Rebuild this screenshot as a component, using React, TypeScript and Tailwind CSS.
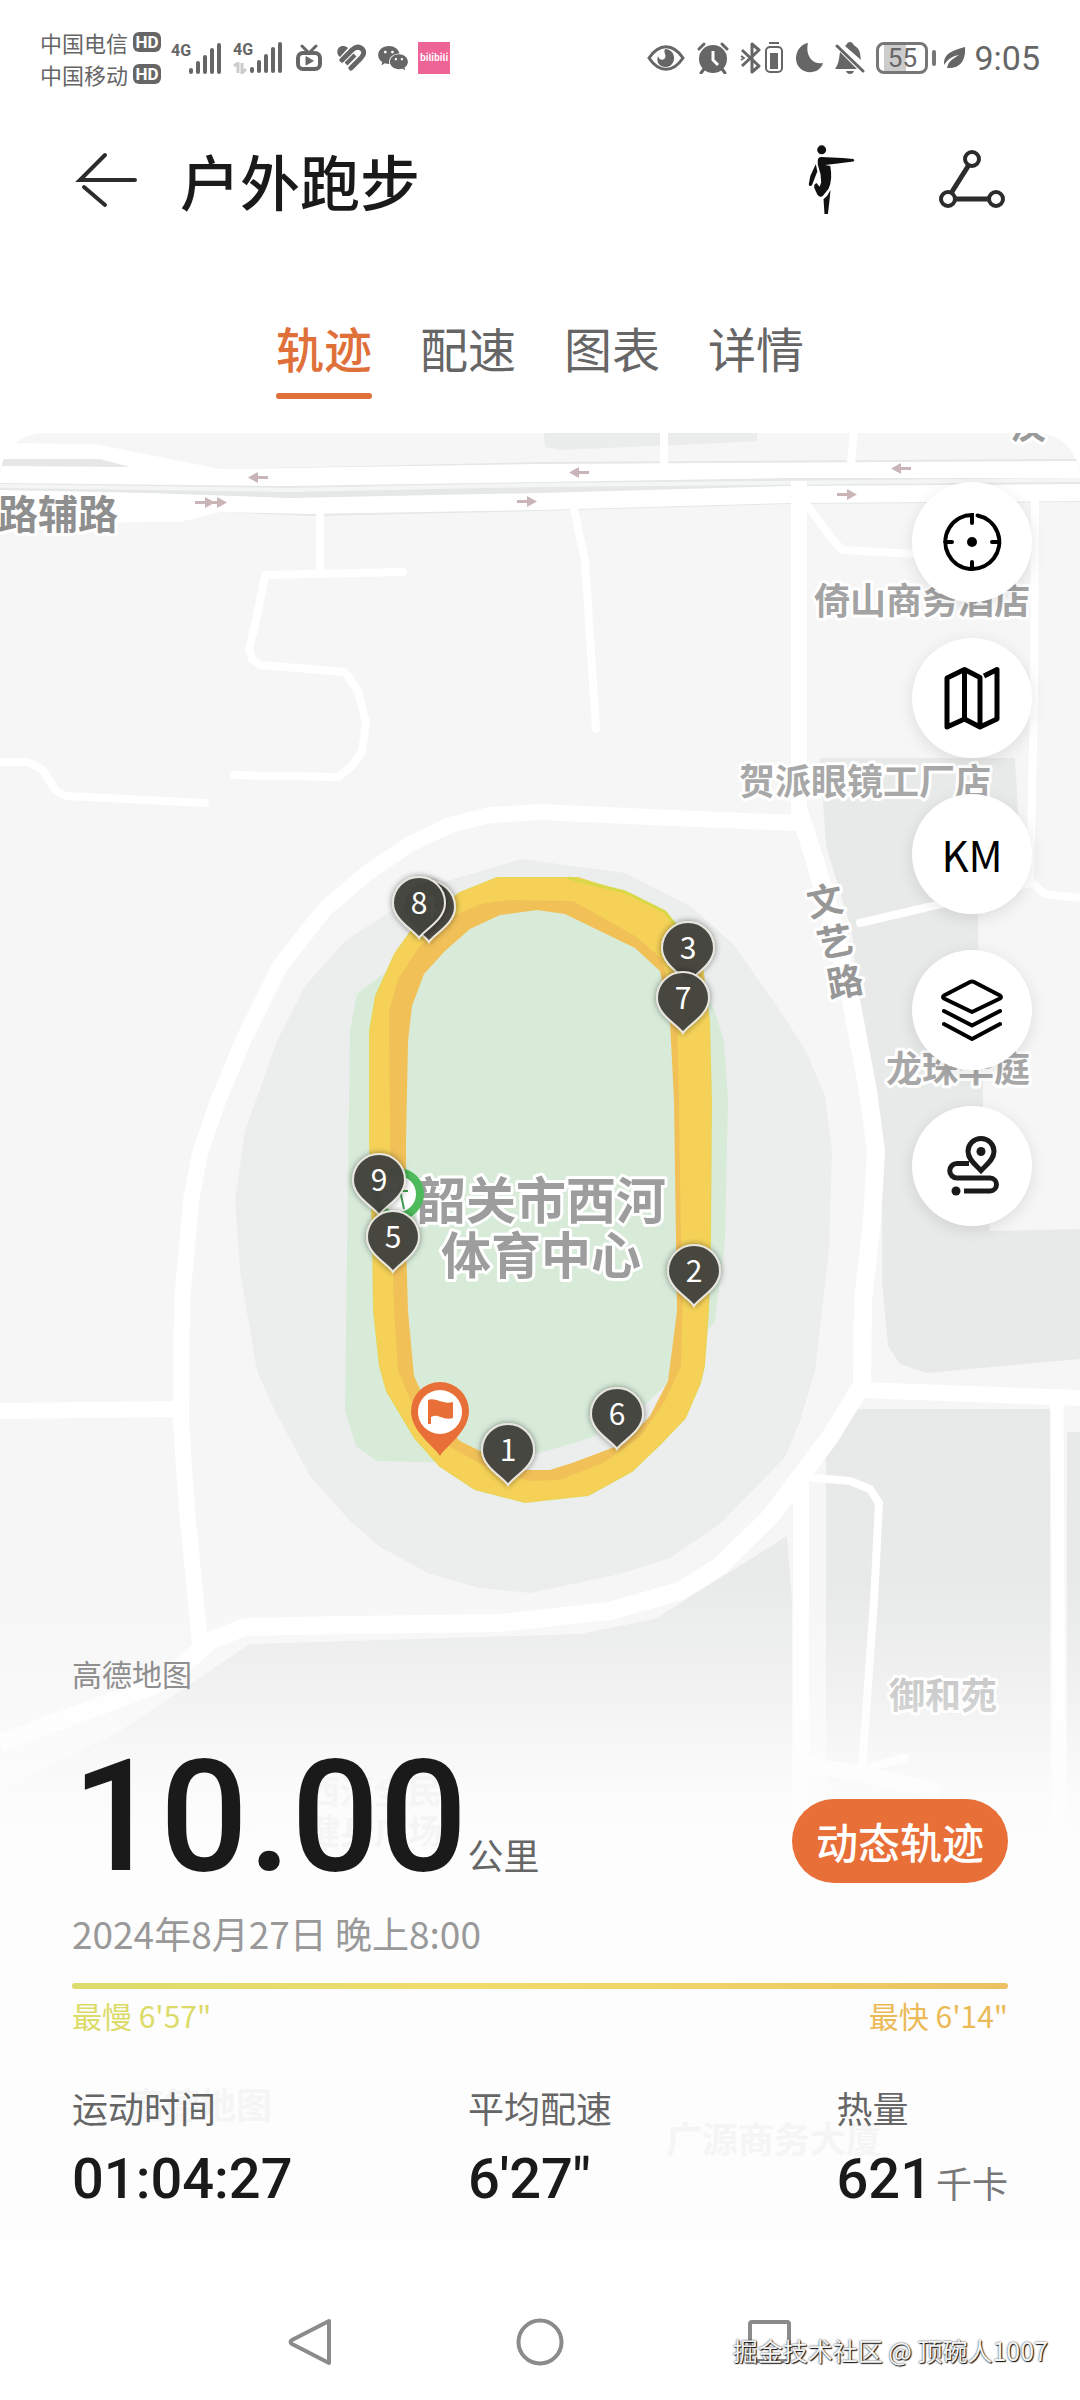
import { useState } from 'react';
import type { ReactNode } from 'react';
import { AiFillWechat } from 'react-icons/ai';

const TABS = ['轨迹', '配速', '图表', '详情'];

interface Pin {
  label: string;
  x: number;
  y: number;
}

// x / y is the tip of each kilometre pin, in map units
const PINS: Pin[] = [
  { label: '4', x: 429, y: 941 },
  { label: '8', x: 419, y: 937 },
  { label: '3', x: 688, y: 982 },
  { label: '7', x: 683, y: 1032 },
  { label: '9', x: 379, y: 1214 },
  { label: '5', x: 393, y: 1271 },
  { label: '2', x: 694, y: 1305 },
  { label: '6', x: 617, y: 1448 },
  { label: '1', x: 508, y: 1484 },
];

const PLACES = [
  { text: '倚山商务酒店', x: 922, y: 613, size: 36, fill: '#a3a3a3' },
  { text: '贺派眼镜工厂店', x: 865, y: 794, size: 36, fill: '#a8a8a8' },
  { text: '龙珠华庭', x: 958, y: 1081, size: 36, fill: '#a8a8a8' },
  { text: '御和苑', x: 943, y: 1708, size: 36, fill: '#a9a9a9' },
  { text: '韶关市西河', x: 541, y: 1218, size: 50, fill: '#9d9d9d' },
  { text: '体育中心', x: 541, y: 1273, size: 50, fill: '#9d9d9d' },
];

// labels of the lower map that shimmer through the summary panel
const FADED_PLACES = [
  { text: '西河全民', x: 374, y: 1803, size: 34 },
  { text: '健身广场', x: 374, y: 1843, size: 34 },
  { text: '高德地图', x: 200, y: 2118, size: 36 },
  { text: '广源商务大厦', x: 774, y: 2152, size: 36 },
];

const TRACK_OUTER =
  'M497 877 L578 877 L625 892 L665 912 L700 950 L709 1020 L711 1100 L710 1240 L708 1310 L704 1365 L700 1382 L685 1417 L660 1443 L632 1470 L588 1494 L525 1501 L475 1488 L440 1465 L415 1437 L387 1390 L380 1365 L374 1310 L373 1240 L370 1140 L370 1030 L376 995 L395 953 L415 925 L460 892 Z';
const TRACK_INNER =
  'M537 909 L500 914 L470 928 L445 950 L424 973 L412 1005 L408 1040 L406 1140 L406 1240 L408 1310 L414 1375 L430 1410 L460 1440 L490 1455 L525 1469 L550 1469 L575 1461 L625 1442 L650 1415 L668 1380 L677 1310 L676 1240 L674 1100 L670 1020 L660 970 L635 947 L600 930 L565 913 Z';
const TRACK_LANE =
  'M510 899 L480 903 L450 917 L420 945 L398 978 L389 1010 L390 1140 L392 1240 L394 1310 L398 1370 L416 1412 L450 1446 L490 1468 L530 1480 L560 1479 L605 1461 L640 1436 L665 1400 L681 1365 L683 1290 L681 1240 L679 1100 L677 1020 L662 958 L635 935 L600 915 L573 900 Z';

function MapArrow({ x, y, flip }: { x: number; y: number; flip?: boolean }) {
  return (
    <g transform={`translate(${x} ${y})${flip ? ' scale(-1 1)' : ''}`} fill="#c9b4b7">
      <rect x="-10" y="-1" width="12" height="3" />
      <path d="M0 -5 L10 0.5 L0 6 Z" />
    </g>
  );
}

function RouteMap() {
  return (
    <svg
      className="absolute inset-0 h-full w-full"
      viewBox="0 432 1080 1808"
      preserveAspectRatio="xMidYMin slice"
      role="img"
      aria-label="跑步轨迹地图"
    >
      <defs>
        <linearGradient id="mapFade" x1="0" y1="0" x2="0" y2="1">
          <stop offset="0" stopColor="#fdfdfd" stopOpacity="0" />
          <stop offset="0.45" stopColor="#fdfdfd" stopOpacity="0.45" />
          <stop offset="0.8" stopColor="#fdfdfd" stopOpacity="0.9" />
          <stop offset="1" stopColor="#fdfdfd" stopOpacity="1" />
        </linearGradient>
        <filter id="pinShadow" x="-50%" y="-50%" width="200%" height="200%">
          <feDropShadow dx="0" dy="0" stdDeviation="3" floodColor="#000" floodOpacity="0.45" />
        </filter>
      </defs>

      <rect y="432" width="1080" height="1808" fill="#f6f6f6" />

      {/* blocks */}
      <g fill="#e8e9e9">
        <path d="M544 432 H757 V440 L700 443 L560 449 L545 446 Z" fill="#eaedec" />
        <path d="M820 757 L1015 757 L1022 885 L978 900 L979 1040 L983 1040 L983 1150 L990 1230 L1080 1228 V1358 L926 1372 L900 1363 L888 1345 L882 1280 L882 1190 L874 1110 L858 1000 L852 930 L826 845 Z" />
        <path d="M857 1408 H1050 V1900 H826 V1456 Z" />
        <path d="M1067 1431 H1080 V1900 H1067 Z" />
        <path d="M787 1535 L655 1618 L580 1633 L250 1643 L120 1730 L0 1790 V1900 H792 V1600 Z" fill="#e9eaea" />
      </g>
      <path
        d="M522 858 L625 872 L690 905 L735 945 L780 1010 L806 1050 L825 1095 L832 1150 L829 1250 L815 1370 L800 1420 L785 1456 L760 1482 L720 1523 L670 1557 L620 1573 L530 1592 L480 1587 L430 1573 L380 1546 L350 1520 L310 1475 L275 1410 L257 1370 L240 1270 L235 1200 L245 1130 L277 1040 L305 985 L345 940 L430 885 Z"
        fill="#ebeeed"
      />
      <path
        d="M390 968 L357 993 L350 1030 L347 1250 L345 1410 L356 1445 L377 1460 L470 1462 L540 1452 L590 1437 L640 1408 L665 1385 L715 1320 L725 1240 L728 1100 L724 1040 L714 1008 L690 960 L600 890 L480 890 Z"
        fill="#d8ebd9"
      />

      {/* main avenue */}
      <path d="M0 458 H110 L220 468 L540 461 L1080 458 V501 L790 503 L540 510 L310 515 L220 511 L0 500 Z" fill="#e5e8e7" />
      <path d="M0 442 L95 443 L220 468 L540 463 L1080 460 V477 H790 L540 481 L290 485 L0 482 V465 L130 466 L100 458 H0 Z" fill="#fff" />
      <path d="M0 489 L150 492 L290 497 L540 492 L790 485 L1080 483 V500 L790 502 L540 509 L310 513 L220 511 L180 521 L0 522 Z" fill="#fff" />
      <path d="M0 485 L290 489 L540 484 L1080 479" fill="none" stroke="#f4f6f5" strokeWidth="4" />

      {/* roads */}
      <g fill="none" stroke="#fff" strokeLinejoin="round">
        <g strokeWidth="8" strokeLinecap="round">
          <path d="M320 512 V571" />
          <path d="M403 571 L265 574 L256 620 L249 648 L252 658 L260 664 L345 671 L358 690 L366 722 L362 750 L352 765 L338 776 L234 774" />
          <path d="M0 761 L28 761 L43 769 L56 790 L66 795 L205 802" />
          <path d="M574 508 L585 560 L596 728" />
          <path d="M664 432 V462 M854 432 L851 462" />
          <path d="M804 500 L830 535 L842 549 L915 553" />
          <path d="M1035 500 L1034 700 L1030 880 L1045 893 L1080 897 M1030 882 L860 922" />
          <path d="M804 1476 L850 1480 L870 1488 L879 1502 L874 1600 L862 1768 L905 1757" />
        </g>
        <path d="M1057 1400 L1060 1900" strokeWidth="13" />
        <g strokeWidth="16">
          <path d="M799 480 V820" />
          <path d="M0 1410 L181 1408" />
          <path d="M862 1389 L1080 1397" />
          <path d="M801 1475 V1900" />
          <path d="M800 1764 L860 1772 L940 1792" />
          <path d="M200 1642 L187 1510 L181 1420 L182 1300 L191 1200 L200 1152 L218 1100 L243 1040 L280 965 L325 908 L367 872 L410 843 L450 824 L490 814 L540 811 L650 816 L796 822" />
        </g>
        <path d="M799 810 L815 860 L838 940 L853 1010 L868 1090 L876 1150 L872 1220 L863 1300 L862 1384 L830 1436 L800 1476 L770 1516 L720 1565 L680 1590 L610 1610 L500 1622 L350 1624 L245 1626 L210 1640 L165 1680 L100 1705 L0 1742" strokeWidth="18" />
      </g>

      <MapArrow x={258} y={476} flip />
      <MapArrow x={205} y={501} />
      <MapArrow x={217} y={501} />
      <MapArrow x={527} y={500} />
      <MapArrow x={579} y={471} flip />
      <MapArrow x={847} y={493} />
      <MapArrow x={901} y={467} flip />

      {/* running track */}
      <path d={TRACK_OUTER} fill="none" stroke="#e6d858" strokeWidth="2" />
      <path d={`${TRACK_OUTER} ${TRACK_INNER}`} fill="#f1c158" fillRule="evenodd" />
      <path d={`${TRACK_OUTER} ${TRACK_LANE}`} fill="#f5d257" fillRule="evenodd" />
      <path d="M568 877 L625 891 L665 911 L676 925" fill="none" stroke="#d8d848" strokeWidth="3" />

      {/* street names */}
      <g fontWeight="700" stroke="#fff" strokeWidth="6" strokeLinejoin="round" paintOrder="stroke">
        <text x="118" y="528" fontSize="40" textAnchor="end" fill="#8f8f8f">路辅路</text>
        <text x="1010" y="438" fontSize="36" fill="#9a9a9a">汶</text>
        {[
          { ch: '文', x: 825, y: 900 },
          { ch: '艺', x: 835, y: 941 },
          { ch: '路', x: 845, y: 981 },
        ].map(({ ch, x, y }) => (
          <text key={ch} transform={`translate(${x} ${y}) rotate(-11)`} y="13" fontSize="36" textAnchor="middle" fill="#979797">
            {ch}
          </text>
        ))}
      </g>

      <g textAnchor="middle" fontWeight="700" stroke="#fff" strokeWidth="6" strokeLinejoin="round" paintOrder="stroke">
        {PLACES.map((place) => (
          <text key={place.text} x={place.x} y={place.y} fontSize={place.size} fill={place.fill}>
            {place.text}
          </text>
        ))}
      </g>

      <circle cx="398" cy="1193" r="22" fill="#fff" stroke="#4dbb5b" strokeWidth="8" />
      <path d="M390 1190 H408 M398 1180 L404 1208" stroke="#3f9d4c" strokeWidth="2" fill="none" />

      {PINS.map((pin) => (
        <g key={pin.label} transform={`translate(${pin.x} ${pin.y})`}>
          <path
            d="M0 0 C-5 -8 -26 -18 -26 -35 A26 26 0 1 1 26 -35 C26 -18 5 -8 0 0 Z"
            fill="#434440"
            fillOpacity="0.96"
            stroke="#e9e6df"
            strokeWidth="2"
            filter="url(#pinShadow)"
          />
          <text y="-24" fontSize="30" textAnchor="middle" fill="#fff">
            {pin.label}
          </text>
        </g>
      ))}

      {/* finish flag */}
      <g transform="translate(440 1455)">
        <path d="M0 0 C-5 -9 -29 -24 -29 -45 A29 29 0 1 1 29 -45 C29 -24 5 -9 0 0 Z" fill="#e86f37" />
        <circle cy="-44" r="22" fill="#fff" />
        <path d="M-12 -56 C-4 -59 2 -51 13 -54 V-38 C3 -35 -2 -43 -9 -39 V-32 H-12 Z" fill="#e86f37" />
      </g>

      <rect y="1580" width="1080" height="260" fill="url(#mapFade)" />
      <rect y="1839" width="1080" height="401" fill="#fdfdfd" />
      <g textAnchor="middle" fontWeight="700" fill="#f5f5f6">
        {FADED_PLACES.map((place) => (
          <text key={place.text} x={place.x} y={place.y} fontSize={place.size}>
            {place.text}
          </text>
        ))}
      </g>
    </svg>
  );
}

function Signal() {
  return (
    <svg className="h-[31px] w-8" viewBox="0 0 32 31" stroke="#666" strokeWidth="4" strokeLinecap="round">
      <path d="M2 27 V29 M9 20 V29 M16 14 V29 M23 7 V29 M30 2 V29" />
    </svg>
  );
}

function Carrier({ name }: { name: string }) {
  return (
    <div className="flex h-8 items-center gap-[5px]">
      <span className="text-[22px] leading-8">{name}</span>
      <span className="flex h-5 w-7 items-center justify-center rounded-md bg-[#666] font-[Roboto,sans-serif] text-[17px] leading-5 font-bold text-white">
        HD
      </span>
    </div>
  );
}

function StatusBar() {
  return (
    <div className="flex items-center justify-between px-10 pt-[26px] text-[#666]">
      <div className="flex items-center">
        <div>
          <Carrier name="中国电信" />
          <Carrier name="中国移动" />
        </div>
        <div className="ml-[10px] flex">
          <span className="w-[18px] font-[Roboto,sans-serif] text-[16px] leading-4 font-bold">4G</span>
          <Signal />
        </div>
        <div className="ml-3 flex">
          <div className="w-[17px]">
            <span className="block font-[Roboto,sans-serif] text-[16px] leading-4 font-bold">4G</span>
            <svg className="mt-1 h-3 w-4" viewBox="0 0 16 12" fill="none" stroke="#ccc" strokeWidth="3">
              <path d="M1 4 L5 1 V11 M9 1 V11 L13 7" />
            </svg>
          </div>
          <Signal />
        </div>
        <svg className="ml-[14px] h-7 w-[26px]" viewBox="0 0 26 28" fill="none" stroke="#666" strokeWidth="4" strokeLinecap="round">
          <rect x="2" y="9" width="22" height="16" rx="5" />
          <path d="M6 2 L12 8 M20 2 L14 8" strokeWidth="3" />
          <path d="M10 13 V21 L17 17 Z" fill="#666" strokeWidth="1" />
        </svg>
        <svg className="ml-[14px] h-7 w-[30px]" viewBox="0 0 30 28" fill="#666">
          <path d="M2 11 C-1 4 6 -1 12 4 L4 13 Z" />
          <path d="M6 16 L16 6 C22 0 30 5 27 11 C26 13 25 14 24 15 L15 24" fill="none" stroke="#666" strokeWidth="5" strokeLinecap="round" />
          <path d="M10 20 L19 11" stroke="#666" strokeWidth="4" />
        </svg>
        <AiFillWechat className="ml-[10px] h-[34px] w-[34px]" />
        <span className="ml-2 flex h-8 w-8 items-center justify-center bg-[#ef6497] text-[9px] leading-4 font-bold text-white">
          bilibili
        </span>
      </div>

      <div className="flex items-center">
        <svg className="h-[26px] w-[38px]" viewBox="0 0 38 26">
          <path d="M2 13 C12 -2 26 -2 36 13 C26 28 12 28 2 13 Z" fill="none" stroke="#666" strokeWidth="3" />
          <path d="M18 4 C31 5 29 22 19 22 C12 22 9 17 11 11 C12 15 16 16 18 13 C20 10 16 8 18 4 Z" fill="#666" />
        </svg>
        <svg className="ml-3 h-8 w-8" viewBox="0 0 32 32">
          <circle cx="16" cy="17" r="14" fill="#666" />
          <path d="M2 7 L7 2 M30 7 L25 2 M4 31 L7 27 M28 31 L25 27" stroke="#666" strokeWidth="3" strokeLinecap="round" />
          <path d="M16 9 V18 L21 23" fill="none" stroke="#fff" strokeWidth="3" />
        </svg>
        <svg className="ml-[11px] h-8 w-[21px]" viewBox="0 0 21 32" fill="none" stroke="#666" strokeWidth="3" strokeLinejoin="round">
          <path d="M2 8 L19 24 L12 30 V2 L19 8 L2 24" />
          <path d="M1 14 L4 16 L1 18" strokeWidth="2" />
        </svg>
        <svg className="ml-1 h-8 w-[18px]" viewBox="0 0 18 32" fill="#666">
          <rect x="4" y="0" width="10" height="2" />
          <rect x="1" y="5" width="16" height="25" rx="4" fill="none" stroke="#666" strokeWidth="2" />
          <rect x="5" y="11" width="8" height="16" />
        </svg>
        <svg className="ml-3 h-[30px] w-[29px]" viewBox="0 0 29 30">
          <path d="M13 0 C10 12 17 22 28 20 C24 34 0 32 1 14 C2 6 7 1 13 0 Z" fill="#666" />
        </svg>
        <svg className="ml-[11px] h-8 w-[30px]" viewBox="0 0 30 32" fill="#666">
          <path d="M10 4 C12 3 12 0 15 0 C18 0 18 3 20 4 C26 8 25 13 26 18 Z" />
          <path d="M5 10 C4 16 4 22 0 27 H22 Z" />
          <path d="M11 29 H19 C18 33 12 33 11 29 Z" />
          <path d="M2 4 L28 29" stroke="#666" strokeWidth="3" strokeLinecap="round" />
        </svg>
        <div className="ml-[11px] flex items-center gap-1">
          <span className="flex h-8 w-[52px] items-center justify-center rounded-lg border-3 border-[#777] bg-[linear-gradient(90deg,transparent_5px,#ccc_5px,#ccc_27px,transparent_27px)] font-[Roboto,sans-serif] text-[26px] leading-[26px]">
            55
          </span>
          <span className="h-4 w-1 rounded-sm bg-[#777]" />
        </div>
        <svg className="ml-2 h-[22px] w-[22px]" viewBox="0 0 22 22" fill="#666">
          <path d="M21 0 C22 12 17 22 3 21 C4 15 8 12 15 8 C8 9 3 13 0 18 C-1 6 10 3 21 0 Z" />
        </svg>
        <time className="ml-2 font-[Roboto,sans-serif] text-[34px] leading-9">9:05</time>
      </div>
    </div>
  );
}

function Header() {
  return (
    <header className="mt-[30px] flex h-[120px] items-center px-[72px]">
      <button type="button" aria-label="返回">
        <svg className="size-[72px]" viewBox="0 0 72 72" fill="none" stroke="#2c2c2c" strokeWidth="4" strokeLinecap="round">
          <path d="M63 36 H8 L33 11 M12 43 L33 61" />
        </svg>
      </button>
      <h1 className="ml-9 text-[60px] leading-[72px] font-medium text-[#1a1a1a]">户外跑步</h1>
      <div className="ml-auto flex gap-[72px]">
        <button type="button" aria-label="拉伸">
          <svg className="size-[72px]" viewBox="0 0 72 74" fill="#111">
            <circle cx="29.5" cy="6" r="4.6" />
            <path d="M25.5 16.5 Q26 13.3 29 13.3 L51 14.3 L62 15.4 Q64 17 62 18 L46 20 L33 21.5 L38.3 22.7 Q41 36 36.6 46 L31 53 Q28 56 25 52 L21.8 45 L22 42 L24 40 L27.5 44 L29 39.3 L28.3 31 L25.5 21 Z" />
            <path d="M23.5 20.5 L25 28.3 L19.4 42.7 Q16 44 16.3 41 L17.8 33 Z" />
            <path d="M38.6 47.3 L37.3 60 L35.9 72 H32.4 L31.4 56.7 L35.2 53.3 Z" />
          </svg>
        </button>
        <button type="button" aria-label="分享">
          <svg className="size-[72px]" viewBox="0 0 72 72" fill="none" stroke="#2c2c2c" strokeWidth="4">
            <circle cx="36" cy="15" r="7" />
            <circle cx="12" cy="55" r="7" />
            <circle cx="60" cy="55" r="7" />
            <path d="M32.5 21.5 L15.5 48.5 M19.5 55 H52.5" strokeWidth="5" />
          </svg>
        </button>
      </div>
    </header>
  );
}

function MapButton({ label, children }: { label: string; children: ReactNode }) {
  return (
    <button
      type="button"
      aria-label={label}
      className="flex size-[120px] items-center justify-center rounded-full bg-white shadow-[0_4px_16px_rgba(0,0,0,0.1)]"
    >
      {children}
    </button>
  );
}

function MapControls() {
  return (
    <div className="relative flex flex-col items-end gap-9 px-12 pt-[49px]">
      <MapButton label="定位">
        <svg className="size-16" viewBox="0 0 64 64" fill="none" stroke="#000" strokeWidth="4" strokeLinecap="round">
          <path d="M37.5 5.5 A27 27 0 1 1 32 5 V13 M5 32 H12 M52 32 H59 M32 52 V59" />
          <circle cx="32" cy="32" r="5" fill="#000" stroke="none" />
        </svg>
      </MapButton>
      <MapButton label="地图类型">
        <svg className="size-16" viewBox="0 0 64 64" fill="none" stroke="#000" strokeWidth="5" strokeLinejoin="round">
          <path d="M40 61 V11.5 L24.5 3.5 L7 12 V61 L24.5 53 L40 61 L57 53 V3.5 L44 10 M24.5 3.5 V53" />
        </svg>
      </MapButton>
      <MapButton label="公里标记">
        <span className="text-[42px] leading-[48px] text-black">KM</span>
      </MapButton>
      <MapButton label="图层">
        <svg className="size-16" viewBox="0 0 64 64" fill="none" stroke="#000" strokeWidth="4" strokeLinecap="round" strokeLinejoin="round">
          <path d="M4 17.5 L30 4 Q32 3 34 4 L60 17.5 Q62 19 60 20.5 L32 34 L4 20.5 Q2 19 4 17.5 Z" />
          <path d="M4 33 L32 47.5 L60 33 M4 46 L32 61 L60 46" />
        </svg>
      </MapButton>
      <MapButton label="路线">
        <svg className="size-16" viewBox="0 0 64 64" fill="none" stroke="#1a1a1a" strokeWidth="5">
          <path d="M41 36.5 C37 32 28 26 28 17.5 A13 13 0 0 1 54 17.5 C54 26 45 32 41 36.5 Z" />
          <path d="M29 29.5 H17 A7 7 0 0 0 17 44 H50 A6.5 6.5 0 0 1 50 57 H24" />
          <circle cx="41" cy="17.5" r="4.5" fill="#1a1a1a" stroke="none" />
          <circle cx="16" cy="57" r="4.5" fill="#1a1a1a" stroke="none" />
        </svg>
      </MapButton>
    </div>
  );
}

function Stat({ label, value, unit }: { label: string; value: string; unit?: string }) {
  return (
    <div>
      <dt className="text-[36px] leading-[48px] text-[#666]">{label}</dt>
      <dd className="mt-4 flex items-baseline gap-1 leading-[64px]">
        <span className="font-[Roboto,sans-serif] text-[56px] font-medium text-[#1a1a1a]">{value}</span>
        {unit && <span className="text-[36px] text-[#777]">{unit}</span>}
      </dd>
    </div>
  );
}

function Summary() {
  return (
    <div className="relative px-[72px] pb-[26px]">
      <p className="text-[30px] leading-[48px] text-[#8f8f8f]">高德地图</p>
      <div className="mt-10 flex items-end justify-between">
        <p className="flex items-baseline">
          <span className="font-[Roboto,sans-serif] text-[155px] leading-[160px] font-medium text-[#1a1a1a]">10.00</span>
          <span className="text-[36px] leading-[48px] text-[#666]">公里</span>
        </p>
        <button type="button" className="mb-[14px] h-[84px] w-[216px] rounded-full bg-[#e86f37] text-[42px] leading-[48px] font-medium text-white">
          动态轨迹
        </button>
      </div>
      <p className="mt-3 text-[37px] leading-[48px] text-[#999]">2024年8月27日 晚上8:00</p>
      <div className="mt-[26px] h-[6px] rounded-full bg-[linear-gradient(90deg,#dbdc6c,#f0dc6c_40%,#f0d468_65%,#ecc062)]" />
      <div className="mt-2 flex justify-between text-[30px] leading-9">
        <span className="text-[#dcdb68]">最慢 6'57"</span>
        <span className="text-[#ebba57]">最快 6'14"</span>
      </div>
      <dl className="mt-[50px] grid grid-cols-[1fr_auto_1fr]">
        <Stat label="运动时间" value="01:04:27" />
        <Stat label="平均配速" value={'6\'27"'} />
        <div className="justify-self-end">
          <Stat label="热量" value="621" unit="千卡" />
        </div>
      </dl>
    </div>
  );
}

export default function App() {
  const [active, setActive] = useState(TABS[0]);

  return (
    <main className="flex min-h-screen flex-col bg-white font-['Noto_Sans_CJK_SC',sans-serif]">
      <StatusBar />
      <Header />

      <nav className="mt-[77px] mb-[34px] flex justify-center gap-12">
        {TABS.map((tab) => (
          <button
            key={tab}
            type="button"
            onClick={() => setActive(tab)}
            className={
              tab === active
                ? 'flex flex-col gap-4 text-[48px] leading-[60px] font-medium text-[#e0703a]'
                : 'flex flex-col gap-4 text-[48px] leading-[60px] text-[#666]'
            }
          >
            {tab}
            {tab === active && <span className="h-[6px] w-full rounded-full bg-[#e0703a]" />}
          </button>
        ))}
      </nav>

      <section className="relative flex flex-1 flex-col justify-between gap-12 overflow-hidden rounded-t-[44px]">
        <RouteMap />
        <MapControls />
        <Summary />
      </section>

      <footer className="relative flex justify-center gap-[182px] pt-[78px] pb-[34px]">
        <button type="button" aria-label="返回">
          <svg className="size-12" viewBox="0 0 48 48" fill="none" stroke="#8b8b8b" strokeWidth="4" strokeLinejoin="round">
            <path d="M43 3 V45 L6 26 Q3 24 6 22 Z" />
          </svg>
        </button>
        <button type="button" aria-label="主页">
          <svg className="size-12" viewBox="0 0 48 48" fill="none" stroke="#8b8b8b" strokeWidth="4">
            <circle cx="24" cy="24" r="21.5" />
          </svg>
        </button>
        <button type="button" aria-label="最近任务">
          <svg className="size-12" viewBox="0 0 48 48" fill="none" stroke="#8b8b8b" strokeWidth="4">
            <rect x="4" y="4" width="39" height="39" rx="2" />
          </svg>
        </button>
        <span className="absolute right-8 bottom-8 text-[25px] leading-9 text-[#f4f4f4] [text-shadow:1px_1px_1px_#111,0_0_2px_#333]">
          掘金技术社区 @ 顶碗人1007
        </span>
      </footer>
    </main>
  );
}
